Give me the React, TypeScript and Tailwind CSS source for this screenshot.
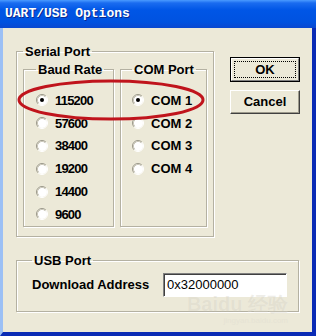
const ui = { fontFamily: '"Liberation Sans", Arial, sans-serif' };

function Radio({ checked }: { checked?: boolean }) {
  return (
    <svg width="12" height="12" viewBox="0 0 12 12" className="shrink-0">
      <circle cx="6" cy="6" r="5" fill="#ffffff" />
      <path d="M2.11 9.89 A5.5 5.5 0 0 1 9.89 2.11" fill="none" stroke="#9a978a" strokeWidth="1" />
      <path d="M9.89 2.11 A5.5 5.5 0 0 1 2.11 9.89" fill="none" stroke="#ffffff" strokeWidth="1" />
      <path d="M2.82 9.18 A4.5 4.5 0 0 1 9.18 2.82" fill="none" stroke="#c9c6b8" strokeWidth="1" />
      {checked && <circle cx="6" cy="6" r="2" fill="#000000" />}
    </svg>
  );
}

function Group({
  label,
  className,
  children,
}: {
  label: string;
  className?: string;
  children: React.ReactNode;
}) {
  return (
    <fieldset
      className={`border border-[#b4b1a2] shadow-[inset_1px_1px_0_#ffffff,1px_1px_0_#ffffff] ${className ?? ""}`}
    >
      <legend className="ml-0 px-[2px] text-[13px] leading-[15px] font-bold text-black">
        {label}
      </legend>
      {children}
    </fieldset>
  );
}

function Option({ label, checked, num }: { label: string; checked?: boolean; num?: boolean }) {
  return (
    <div className="flex h-[22.8px] items-center gap-[7px]">
      <Radio checked={checked} />
      <span
        className={`text-[13px] font-bold text-black leading-none ${num ? "tracking-[-0.8px]" : ""}`}
      >
        {label}
      </span>
    </div>
  );
}

export default function App() {
  const bauds = ["115200", "57600", "38400", "19200", "14400", "9600"];
  const ports = ["COM 1", "COM 2", "COM 3", "COM 4"];

  return (
    <div className="relative flex h-[336px] w-[316px] flex-col overflow-hidden bg-[#0a3ed0]" style={ui}>
      {/* title bar */}
      <div className="flex h-[28px] items-center bg-[linear-gradient(to_bottom,#4a9bff_0px,#1a6cf0_3px,#0056e6_10px,#0052e0_22px,#0a48d0_28px)] pl-[5px]">
        <span
          className="text-[13px] font-bold text-white [text-shadow:1px_1px_0_#0a2a90]"
          style={{ fontFamily: '"Liberation Mono", "Courier New", monospace' }}
        >
          UART/USB Options
        </span>
      </div>

      {/* body */}
      <div className="flex flex-1 flex-col border-l-[3px] border-l-[#9cc0f5] border-r-[4px] border-r-[#0a2bb5] border-b-[4px] border-b-[#0a2bb5] bg-[#ece9d8] pl-[13px] pt-[16px]">
        <div className="flex">
          <Group label="Serial Port" className="flex w-[198px] pb-[9px] pl-[6px] pr-[6px]">
            <div className="mt-[3px] flex gap-[6px]">
              <Group label="Baud Rate" className="w-[91px] pl-[12px] pt-[12px]">
                {bauds.map((b, i) => (
                  <Option key={b} label={b} checked={i === 0} num />
                ))}
              </Group>
              <Group label="COM Port" className="w-[87px] pl-[11px] pt-[12px]">
                {ports.map((p, i) => (
                  <Option key={p} label={p} checked={i === 0} />
                ))}
              </Group>
            </div>
          </Group>

          <div className="ml-[16px] mt-[13px] flex flex-col gap-[8px]">
            <div className="h-[25px] w-[70px] border border-black">
              <div className="flex h-full w-full items-center justify-center border-t border-l border-white border-r border-b border-r-[#808080] border-b-[#808080] p-[2px]">
                <div className="flex h-full w-full items-center justify-center border border-dotted border-black text-[13px] font-bold text-black">
                  OK
                </div>
              </div>
            </div>
            <div className="flex h-[24px] w-[70px] items-center justify-center border-t border-l border-white border-r border-b border-r-[#404040] border-b-[#404040] shadow-[inset_-1px_-1px_0_#9d9a8c] text-[13px] font-bold text-black">
              Cancel
            </div>
          </div>
        </div>

        <Group label="USB Port" className="relative mt-[16px] w-[283px] pb-[14px] pl-[15px] pr-[11px]">
          <div className="mt-[5px] flex items-center">
            <span className="text-[13px] font-bold text-black">Download Address</span>
            <div className="ml-auto flex h-[24px] w-[124px] items-center border-t border-l border-[#808080] border-r border-b border-r-white border-b-white bg-white pl-[3px] shadow-[inset_1px_1px_0_#404040] text-[13px] text-black">
              0x32000000
            </div>
          </div>
          <div className="pointer-events-none absolute right-[10px] top-[26px] flex flex-col items-end opacity-40">
            <span className="text-[20px] font-bold leading-none text-[#d6d3c7] [text-shadow:0_0_1px_#ffffff]">
              Baidu 经验
            </span>
            <span className="mt-[3px] text-[8px] leading-none text-[#dedbd0]">jingyan.baidu.com</span>
          </div>
        </Group>
      </div>

      {/* red annotation ellipse */}
      <svg className="pointer-events-none absolute left-0 top-0" width="316" height="336">
        <ellipse cx="111" cy="100" rx="92" ry="19" fill="none" stroke="#c0141c" strokeWidth="3" />
      </svg>
    </div>
  );
}
